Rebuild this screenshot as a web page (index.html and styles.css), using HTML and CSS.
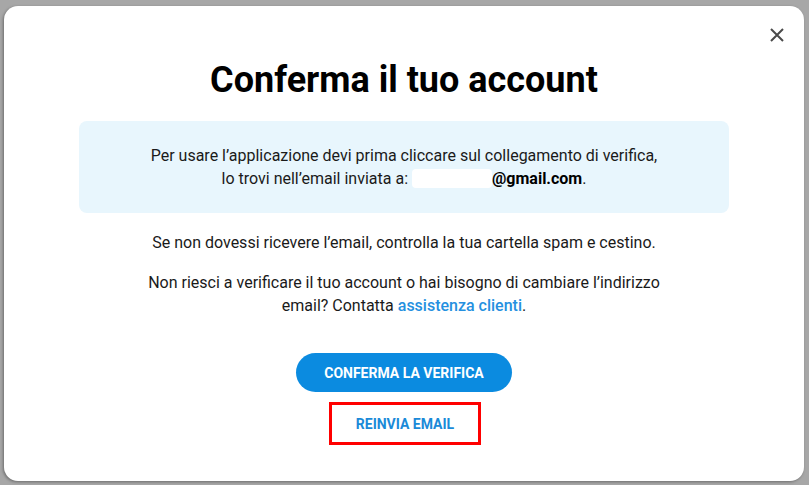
FILE: index.html
```html
<!DOCTYPE html>
<html>
<head>
	<meta charset="utf-8">
	<title>Conferma il tuo account</title>
	<link rel="stylesheet" href="styles.css">
</head>
<body>
	<div class="modal">
		<button class="close" type="button" aria-label="Chiudi">
			<svg width="16" height="16" viewBox="0 0 16 16"><path d="M2 2 L14 14 M14 2 L2 14" stroke="#4a4a4a" stroke-width="2" fill="none"/></svg>
		</button>
		<h1>Conferma il tuo account</h1>
		<div class="info">
			<p>Per usare l’applicazione devi prima cliccare sul collegamento di verifica,<br>
			lo trovi nell’email inviata a: <span class="hidden-mail"></span><strong>@gmail.com</strong>.</p>
		</div>
		<p class="text">Se non dovessi ricevere l’email, controlla la tua cartella spam e cestino.</p>
		<p class="text narrow">Non riesci a verificare il tuo account o hai bisogno di cambiare l’indirizzo email? Contatta <a href="#">assistenza clienti</a>.</p>
		<div class="actions">
			<button class="primary" type="button">Conferma la verifica</button>
			<button class="secondary" type="button">Reinvia email</button>
		</div>
	</div>
</body>
</html>
```

FILE: styles.css
```css
*{
	margin: 0;
	padding: 0;
	box-sizing: border-box;
}
body{
	background-color: #a7a7a7;
	font-family: Roboto, "Liberation Sans", sans-serif;
	color: #1a1a1a;
	padding: 6px 5px 4px 4px;
}
.modal{
	position: relative;
	background: white;
	border-radius: 14px;
	height: 475px;
	padding: 52px 75px 0;
	text-align: center;
	box-shadow: -1px 1px 3px rgba(0,0,0,.35);
}
.close{
	position: absolute;
	top: 21px;
	right: 19px;
	background: transparent;
	border: none;
	width: 16px;
	height: 16px;
}
.close svg{
	display: block;
}
h1{
	font-size: 36px;
	font-weight: 700;
	color: #000;
	line-height: 44px;
	margin-bottom: 19px;
}
.info{
	background-color: #e8f6fd;
	border-radius: 8px;
	height: 92px;
	padding-top: 23px;
	margin-bottom: 18px;
}
.info p, .text{
	font-size: 16px;
	line-height: 23px;
}
.hidden-mail{
	display: inline-block;
	vertical-align: -4px;
	width: 80px;
	height: 19px;
	background: white;
	border-radius: 4px;
}
.info strong{
	font-weight: 700;
	color: #000;
}
.text{
	margin-bottom: 17px;
}
.narrow{
	max-width: 530px;
	margin: 0 auto;
}
.text a{
	color: #2590e0;
	text-decoration: none;
	font-weight: 500;
}
.actions{
	display: flex;
	flex-direction: column;
	align-items: center;
	margin-top: 36px;
}
.primary{
	background-color: #0b8be0;
	color: white;
	border: none;
	border-radius: 20px;
	width: 216px;
	height: 39px;
	font-family: Roboto, sans-serif;
	font-size: 14px;
	font-weight: 700;
	text-transform: uppercase;
}
.secondary{
	margin-top: 10px;
	margin-left: 2px;
	background: transparent;
	border: 3px solid #f00;
	color: #1a8ad8;
	width: 152px;
	height: 43px;
	font-family: Roboto, sans-serif;
	font-size: 14px;
	font-weight: 700;
	text-transform: uppercase;
}
```
